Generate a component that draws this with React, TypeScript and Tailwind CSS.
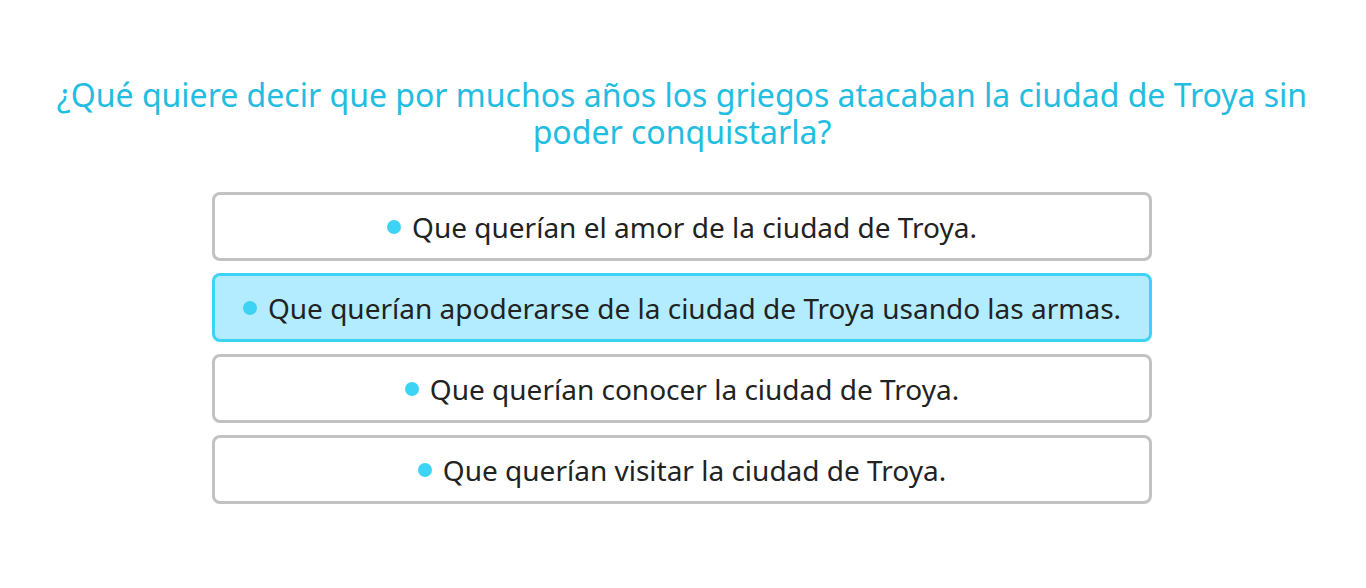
const options = [
  { id: 'a', label: 'Que querían el amor de la ciudad de Troya.' },
  { id: 'b', label: 'Que querían apoderarse de la ciudad de Troya usando las armas.' },
  { id: 'c', label: 'Que querían conocer la ciudad de Troya.' },
  { id: 'd', label: 'Que querían visitar la ciudad de Troya.' },
]

export default function App() {
  const selected = 'b'

  return (
    <div className="min-h-screen bg-white font-['Noto_Sans',sans-serif]">
      <div className="pt-[76px] pl-[40px] pr-[42px]">
        <h1 className="text-center text-[#22bde0] text-[32px] leading-[37px] mx-auto max-w-[1290px]">
          ¿Qué quiere decir que por muchos años los griegos atacaban la ciudad de Troya sin poder conquistarla?
        </h1>

        {/* opciones */}
        <div className="mt-[42px] w-[940px] mx-auto flex flex-col gap-[12px]">
          {options.map((opt) => (
            <button
              key={opt.id}
              className={
                opt.id === selected
                  ? 'h-[69px] flex items-center justify-center gap-[11px] rounded-[8px] border-[3px] border-[#3dd3f5] bg-[#b3ecff] text-[#222] text-[28px]'
                  : 'h-[69px] flex items-center justify-center gap-[11px] rounded-[8px] border-[3px] border-[#c2c2c2] bg-white text-[#222] text-[28px]'
              }
            >
              <span className="w-[14px] h-[14px] rounded-full bg-[#3dd3f5] shrink-0" />
              <span>{opt.label}</span>
            </button>
          ))}
        </div>
      </div>
    </div>
  )
}
